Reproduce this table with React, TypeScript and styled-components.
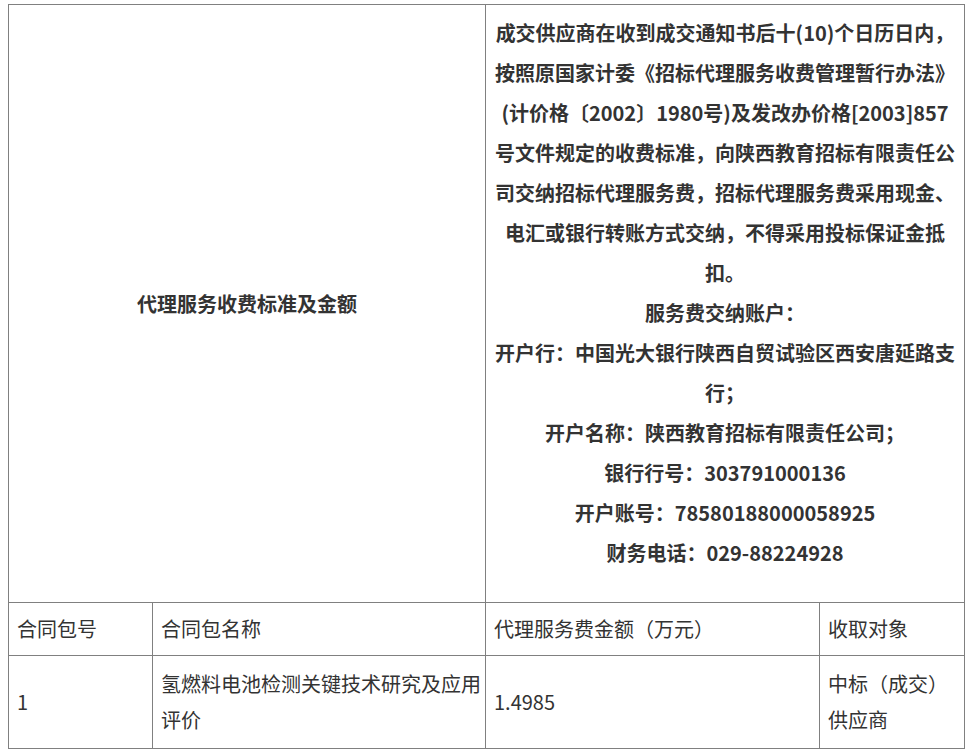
import React from 'react';
import styled, { createGlobalStyle } from 'styled-components';

const GlobalStyle = createGlobalStyle`
  html, body {
    margin: 0;
    padding: 0;
    background: #fff;
  }
  body {
    font-family: "Noto Sans CJK SC", "Noto Sans", sans-serif;
    color: #333;
  }
`;

const Page = styled.div`
  padding: 4px 0 0 8px;
`;

const Table = styled.table`
  border-collapse: collapse;
  table-layout: fixed;
  width: 956px;
  font-size: 20px;
`;

const Cell = styled.td<{ $bold?: boolean; $center?: boolean }>`
  border: 1px solid #808080;
  padding: 8px 8px;
  line-height: 36px;
  vertical-align: middle;
  font-weight: ${(p) => (p.$bold ? 700 : 400)};
  text-align: ${(p) => (p.$center ? 'center' : 'left')};
  color: #333;
`;

const FeeCell = styled(Cell)`
  padding: 8px 8px 29px;
  line-height: 40px;
`;

const DataCell = styled(Cell)`
  padding: 10px 8px;
`;

const Line = styled.span`
  display: block;
  white-space: nowrap;
`;

const feeLines = [
  '成交供应商在收到成交通知书后十(10)个日历日内，',
  '按照原国家计委《招标代理服务收费管理暂行办法》',
  '(计价格〔2002〕1980号)及发改办价格[2003]857',
  '号文件规定的收费标准，向陕西教育招标有限责任公',
  '司交纳招标代理服务费，招标代理服务费采用现金、',
  '电汇或银行转账方式交纳，不得采用投标保证金抵',
  '扣。',
  '服务费交纳账户：',
  '开户行：中国光大银行陕西自贸试验区西安唐延路支',
  '行；',
  '开户名称：陕西教育招标有限责任公司；',
  '银行行号：303791000136',
  '开户账号：78580188000058925',
  '财务电话：029-88224928',
];

const headers = ['合同包号', '合同包名称', '代理服务费金额（万元）', '收取对象'];

const rows = [
  {
    no: '1',
    name: ['氢燃料电池检测关键技术研究及应用', '评价'],
    amount: '1.4985',
    target: ['中标（成交）', '供应商'],
  },
];

export default function App() {
  return (
    <Page>
      <GlobalStyle />
      <Table>
        <colgroup>
          <col style={{ width: 144 }} />
          <col style={{ width: 333 }} />
          <col style={{ width: 334 }} />
          <col style={{ width: 145 }} />
        </colgroup>
        <tbody>
          <tr>
            <Cell colSpan={2} $bold $center>
              代理服务收费标准及金额
            </Cell>
            <FeeCell colSpan={2} $bold $center>
              {feeLines.map((l, i) => (
                <Line key={i}>{l}</Line>
              ))}
            </FeeCell>
          </tr>
          <tr>
            {headers.map((h) => (
              <Cell key={h}>{h}</Cell>
            ))}
          </tr>
          {rows.map((r) => (
            <tr key={r.no}>
              <DataCell>{r.no}</DataCell>
              <DataCell>
                {r.name.map((l) => (
                  <Line key={l}>{l}</Line>
                ))}
              </DataCell>
              <DataCell>{r.amount}</DataCell>
              <DataCell>
                {r.target.map((l) => (
                  <Line key={l}>{l}</Line>
                ))}
              </DataCell>
            </tr>
          ))}
        </tbody>
      </Table>
    </Page>
  );
}
